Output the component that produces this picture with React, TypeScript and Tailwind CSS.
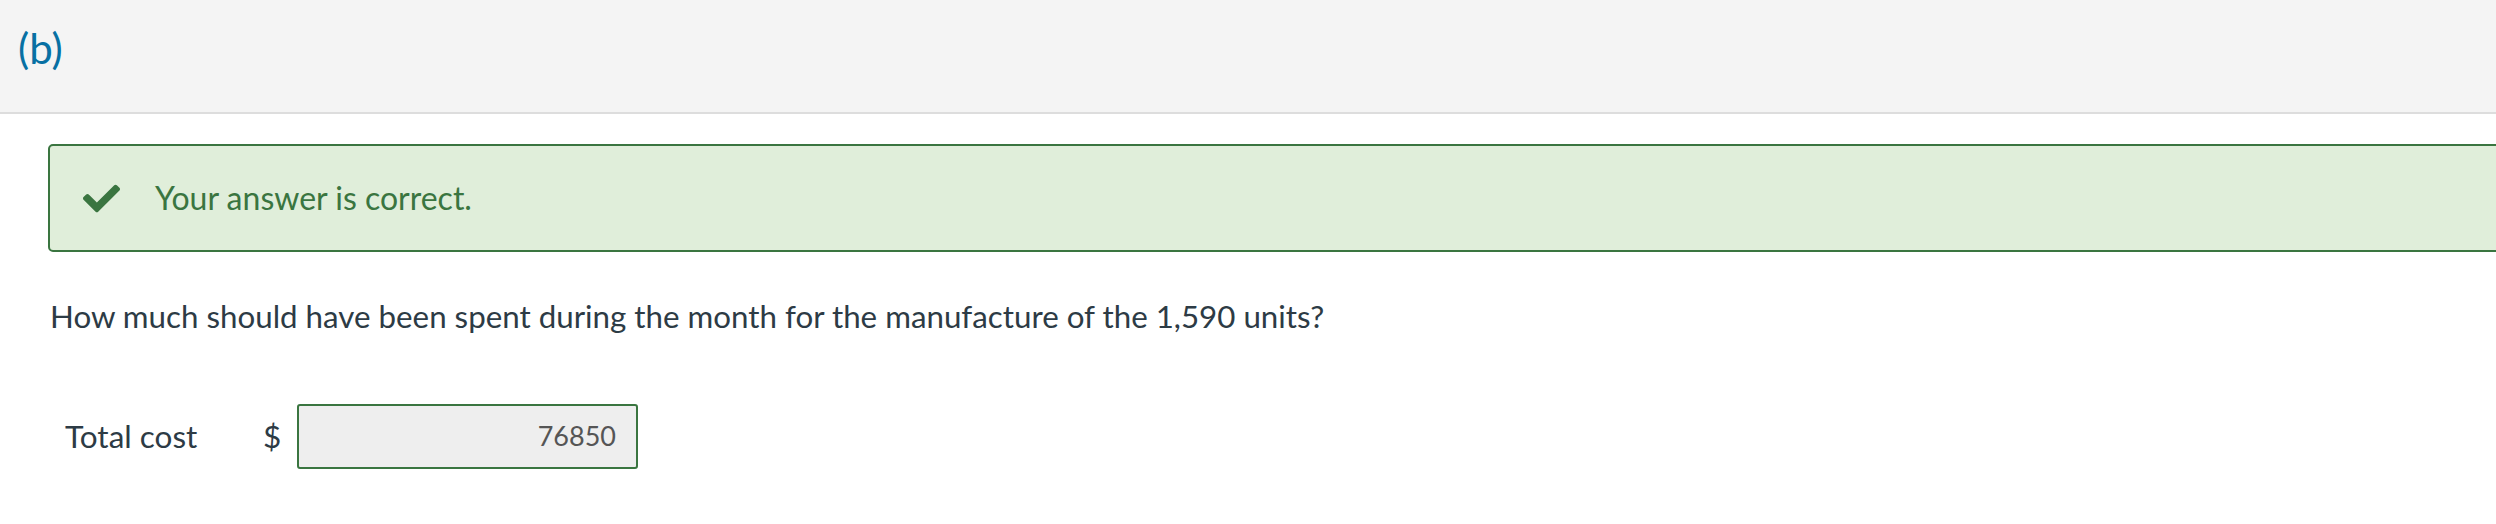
export default function App() {
  return (
    <div className="min-h-screen w-full overflow-hidden bg-white font-['Lato',sans-serif] text-[#2d3b45]">
      {/* Part header */}
      <div className="h-[114px] border-b-2 border-[#dddddd] bg-[#f4f4f4] pl-[18px] pt-[20px]">
        <span className="text-[42px] leading-[56px] text-[#0770a3]">(b)</span>
      </div>

      <div className="pl-[48px] pt-[30px]">
        {/* Feedback */}
        <div className="-mr-10 flex h-[108px] items-center rounded-[5px] border-2 border-[#3a7540] bg-[#e0eeda] pl-[33px]">
          <svg viewBox="0 0 512 512" className="h-[37px] w-[37px] fill-[#3a7540]">
            <path d="M173.898 439.404l-166.4-166.4c-9.997-9.997-9.997-26.206 0-36.204l36.203-36.204c9.997-9.998 26.207-9.998 36.204 0L192 312.69 432.095 72.596c9.997-9.997 26.207-9.997 36.204 0l36.203 36.204c9.997 9.997 9.997 26.206 0 36.204l-294.4 294.401c-9.998 9.997-26.207 9.997-36.204-.001z" />
          </svg>
          <span className="ml-[35px] text-[32px] text-[#3a7540]">Your answer is correct.</span>
        </div>

        {/* Question */}
        <p className="mt-[42px] pl-[2px] text-[31.3px] leading-[44px]">
          How much should have been spent during the month for the manufacture of the 1,590 units?
        </p>

        {/* Answer row */}
        <div className="mt-[66px] flex items-center">
          <span className="w-[215px] pl-[17px] text-[31.5px]">Total cost</span>
          <span className="w-[34px] text-[31.5px]">$</span>
          <div className="flex h-[65px] w-[341px] items-center justify-end rounded-[3px] border-2 border-[#3a7540] bg-[#eeeeee] pr-[20px] text-[27px] text-[#555555]">
            76850
          </div>
        </div>
      </div>
    </div>
  );
}
